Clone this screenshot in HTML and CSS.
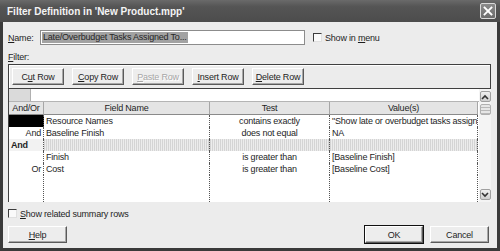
FILE: index.html
```html
<!DOCTYPE html>
<html lang="en">
<head>
  <meta charset="UTF-8" />
  <title>Filter Definition</title>
  <link rel="stylesheet" href="styles.css">
</head>
<body>

  <div class="window">
    <div class="titlebar">
      <span class="title">Filter Definition in 'New Product.mpp'</span>
      <span class="close">
        <svg width="14" height="14" viewBox="0 0 14 14">
          <path d="M3.5 3.5 L10.5 10.5 M10.5 3.5 L3.5 10.5" stroke="#fff" stroke-width="1.8" stroke-linecap="square"/>
        </svg>
      </span>
    </div>

    <div class="content">
      <div class="name-row">
        <span class="name-label"><u>N</u>ame:</span>
        <div class="name-input"><span class="selected">Late/Overbudget Tasks Assigned To...</span></div>
        <span class="check"></span>
        <span class="check-text">Show in <u>m</u>enu</span>
      </div>

      <div class="filter-label"><u>F</u>ilter:</div>

      <div class="toolbar">
        <button class="btn">C<u>u</u>t Row</button>
        <button class="btn"><u>C</u>opy Row</button>
        <button class="btn" disabled><u>P</u>aste Row</button>
        <button class="btn"><u>I</u>nsert Row</button>
        <button class="btn"><u>D</u>elete Row</button>
      </div>

      <div class="grid-wrap">
        <div class="sheet">
          <div class="edit-row">
            <div class="edit-corner"></div>
            <div class="edit-field"></div>
          </div>
          <div class="table">
            <div class="th">And/Or</div>
            <div class="th">Field Name</div>
            <div class="th">Test</div>
            <div class="th">Value(s)</div>

            <div class="td andor active"></div>
            <div class="td">Resource Names</div>
            <div class="td test">contains exactly</div>
            <div class="td">"Show late or overbudget tasks assign</div>

            <div class="td andor">And</div>
            <div class="td">Baseline Finish</div>
            <div class="td test">does not equal</div>
            <div class="td">NA</div>

            <div class="td group">And</div>
            <div class="td hatch"></div>
            <div class="td hatch"></div>
            <div class="td hatch"></div>

            <div class="td andor"></div>
            <div class="td">Finish</div>
            <div class="td test">is greater than</div>
            <div class="td">[Baseline Finish]</div>

            <div class="td andor">Or</div>
            <div class="td">Cost</div>
            <div class="td test">is greater than</div>
            <div class="td">[Baseline Cost]</div>

            <div class="td"></div>
            <div class="td"></div>
            <div class="td"></div>
            <div class="td"></div>
          </div>
        </div>
        <div class="scrollbar">
          <span class="arrow">
            <svg width="8" height="6" viewBox="0 0 8 6"><path d="M1 5 L4 2 L7 5" fill="none" stroke="#333" stroke-width="1.6"/></svg>
          </span>
          <span class="thumb"></span>
          <span class="track"></span>
          <span class="arrow">
            <svg width="8" height="6" viewBox="0 0 8 6"><path d="M1 1 L4 4 L7 1" fill="none" stroke="#333" stroke-width="1.6"/></svg>
          </span>
        </div>
      </div>

      <div class="summary-row">
        <span class="check"></span>
        <span class="check-text"><u>S</u>how related summary rows</span>
      </div>

      <div class="footer">
        <button class="btn btn-wide"><u>H</u>elp</button>
        <div class="footer-right">
          <button class="btn btn-wide btn-default">OK</button>
          <button class="btn btn-wide">Cancel</button>
        </div>
      </div>
    </div>
  </div>

</body>
</html>
```

FILE: styles.css
```css
* { box-sizing: border-box; }

body {
  margin: 0;
  background: #2e2e2e;
  font-family: 'Liberation Sans', Arial, sans-serif;
  font-size: 9px;
  letter-spacing: -0.2px;
  color: #1e1e1e;
}

u { text-underline-offset: 1px; }

.window {
  width: 500px;
  height: 251px;
  display: flex;
  flex-direction: column;
  background: #3a3a3a;
}

.titlebar {
  height: 22px;
  display: flex;
  align-items: center;
  justify-content: space-between;
  padding: 0 4px 0 7px;
  background: linear-gradient(#6a6a6a, #555 30%, #4c4c4c);
}

.title {
  color: #f4f4f4;
  font-weight: bold;
  font-size: 10px;
  letter-spacing: 0;
}

.close {
  width: 16px;
  height: 16px;
  display: flex;
  align-items: center;
  justify-content: center;
  border: 1px solid #d8d8d8;
  border-radius: 2px;
  background: linear-gradient(#8a8a8a, #6c6c6c);
}

.content {
  flex: 1;
  margin: 0 3px 3px 3px;
  padding: 8px 6px 0 5px;
  background: #ececec;
}

.name-row {
  height: 15px;
  display: flex;
  align-items: center;
}

.name-label { width: 32px; }

.name-input {
  width: 265px;
  height: 15px;
  padding: 1px 1px;
  border: 1px solid #8c8c8c;
  background: #fff;
  display: flex;
}

.selected {
  background: #a2a2a2;
  color: #262626;
  padding: 0 1px;
  line-height: 11px;
}

.check {
  width: 9px;
  height: 9px;
  margin: 0 3px 0 8px;
  border: 1px solid;
  border-color: #3c3c3c #e0e0e0 #e0e0e0 #3c3c3c;
  background: #fafafa;
}

.filter-label {
  margin-top: 6px;
  height: 13px;
  line-height: 12px;
}

.toolbar {
  width: 483px;
  height: 25px;
  display: flex;
  gap: 8px;
  padding: 3px 3px;
  border: 1px solid #404040;
  box-shadow: inset 1px 1px 0 #fff;
}

.btn {
  width: 52px;
  height: 17px;
  padding: 0;
  font-family: inherit;
  font-size: 9px;
  letter-spacing: -0.2px;
  color: #1e1e1e;
  background: #ededed;
  border: 1px solid;
  border-color: #fff #5a5a5a #5a5a5a #fff;
  box-shadow: inset -1px -1px 0 #a8a8a8;
}

.btn:disabled {
  color: #a6a6a6;
  text-shadow: 1px 1px 0 #fff;
}

.grid-wrap {
  width: 483px;
  height: 113px;
  display: flex;
  border-left: 1px solid #404040;
  background: #fff;
}

.sheet {
  width: 470px;
  display: flex;
  flex-direction: column;
}

.edit-row {
  height: 13px;
  display: flex;
  border-bottom: 1px solid #b4b4b4;
}

.edit-corner {
  width: 22px;
  background: #dadada;
  border-right: 1px solid #b0b0b0;
}

.edit-field { flex: 1; background: #fff; }

.table {
  flex: 1;
  display: grid;
  grid-template-columns: 35px 166px 120px 148px;
  grid-template-rows: 13px repeat(5, 12px) 1fr;
}

.th {
  text-align: center;
  line-height: 12px;
  background: #e4e4e4;
  border-right: 1px solid #a6a6a6;
  border-bottom: 1px solid #8a8a8a;
}

.td {
  line-height: 12px;
  padding: 0 2px;
  white-space: nowrap;
  overflow: hidden;
  border-right: 1px dotted #555;
}

.andor { text-align: right; }
.test { text-align: center; }

.active { background: #000; }

.group {
  font-weight: bold;
  background: #f2f2f2;
}

.hatch {
  background: repeating-linear-gradient(90deg, #d4d4d4 0 1px, #ececec 1px 2px);
}

.scrollbar {
  width: 12px;
  display: flex;
  flex-direction: column;
  align-items: center;
  padding: 2px 0 2px;
  background: #f4f4f4;
}

.arrow {
  width: 11px;
  height: 11px;
  display: flex;
  align-items: center;
  justify-content: center;
  border: 1px solid #a0a0a0;
  border-radius: 2px;
  background: linear-gradient(#f0f0f0, #cfcfcf);
}

.thumb {
  width: 11px;
  height: 11px;
  margin-top: 2px;
  border: 1px solid #b0b0b0;
  border-radius: 2px;
  background: repeating-linear-gradient(#e6e6e6 0 2px, #b8b8b8 2px 3px);
}

.track { flex: 1; }

.summary-row {
  margin-top: 7px;
  height: 9px;
  display: flex;
  align-items: center;
}

.summary-row .check { margin-left: 0; }

.footer {
  margin-top: 8px;
  padding-right: 2px;
  display: flex;
  justify-content: space-between;
}

.footer-right {
  display: flex;
  gap: 7px;
}

.btn-wide { width: 59px; }

.btn-default {
  width: 58px;
  outline: 1px solid #111;
}
```
